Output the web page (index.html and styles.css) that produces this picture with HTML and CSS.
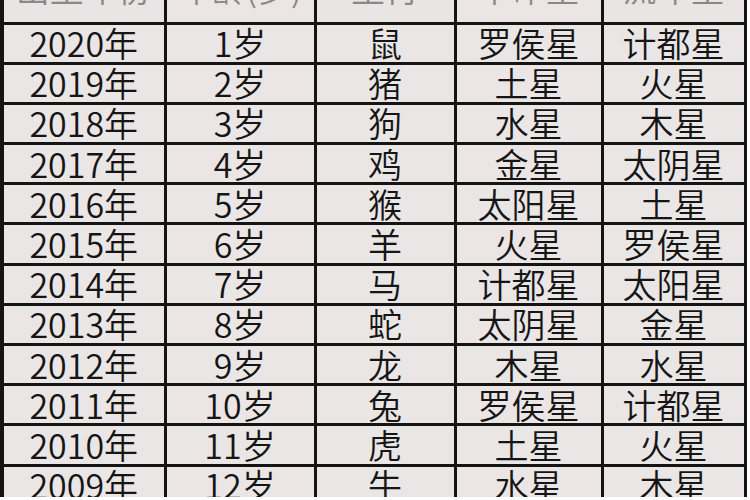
FILE: index.html
```html
<!DOCTYPE html>
<html lang="zh-CN">
<head>
<meta charset="utf-8">
<title>命星表</title>
<link rel="stylesheet" href="styles.css">
</head>
<body>
<div class="frame">
  <div class="grid">
    <div class="cell head"><span>出生年份</span></div>
    <div class="cell head"><span>年龄(岁)</span></div>
    <div class="cell head"><span>生肖</span></div>
    <div class="cell head"><span>本命星</span></div>
    <div class="cell head"><span>流年星</span></div>

    <div class="cell">2020年</div><div class="cell">1岁</div><div class="cell">鼠</div><div class="cell">罗侯星</div><div class="cell">计都星</div>
    <div class="cell">2019年</div><div class="cell">2岁</div><div class="cell">猪</div><div class="cell">土星</div><div class="cell">火星</div>
    <div class="cell">2018年</div><div class="cell">3岁</div><div class="cell">狗</div><div class="cell">水星</div><div class="cell">木星</div>
    <div class="cell">2017年</div><div class="cell">4岁</div><div class="cell">鸡</div><div class="cell">金星</div><div class="cell">太阴星</div>
    <div class="cell">2016年</div><div class="cell">5岁</div><div class="cell">猴</div><div class="cell">太阳星</div><div class="cell">土星</div>
    <div class="cell">2015年</div><div class="cell">6岁</div><div class="cell">羊</div><div class="cell">火星</div><div class="cell">罗侯星</div>
    <div class="cell">2014年</div><div class="cell">7岁</div><div class="cell">马</div><div class="cell">计都星</div><div class="cell">太阳星</div>
    <div class="cell">2013年</div><div class="cell">8岁</div><div class="cell">蛇</div><div class="cell">太阴星</div><div class="cell">金星</div>
    <div class="cell">2012年</div><div class="cell">9岁</div><div class="cell">龙</div><div class="cell">木星</div><div class="cell">水星</div>
    <div class="cell">2011年</div><div class="cell">10岁</div><div class="cell">兔</div><div class="cell">罗侯星</div><div class="cell">计都星</div>
    <div class="cell">2010年</div><div class="cell">11岁</div><div class="cell">虎</div><div class="cell">土星</div><div class="cell">火星</div>
    <div class="cell">2009年</div><div class="cell">12岁</div><div class="cell">牛</div><div class="cell">水星</div><div class="cell">木星</div>
  </div>
</div>
</body>
</html>
```

FILE: styles.css
```css
html, body {
  margin: 0;
  padding: 0;
  background: #ffffff;
  width: 750px;
  height: 500px;
  overflow: hidden;
}

.frame {
  width: 750px;
  height: 497px;
  overflow: hidden;
}

.grid {
  display: grid;
  width: 746.5px;
  box-sizing: border-box;
  grid-template-columns: 159.5px 147px 137px 144px 140px;
  grid-template-rows: 21.5px repeat(12, 37.2px);
  column-gap: 3px;
  row-gap: 3px;
  padding: 0 3px 3px 4px;
  background: #141414;
}

.cell {
  background: #e9e6e5;
  display: flex;
  align-items: center;
  justify-content: center;
  font-family: "Noto Sans CJK SC", "Noto Sans", sans-serif;
  font-weight: 350;
  font-size: 34px;
  line-height: 34px;
  color: #151515;
  overflow: hidden;
  white-space: nowrap;
}

.cell:nth-child(10n+2),
.cell:nth-child(10n+4) {
  background: #ebe5e5;
}

.head {
  align-items: flex-start;
  background: #e8e5e4;
}

.head span {
  display: block;
  line-height: 20px;
  height: 20px;
  margin-top: -22px;
  color: #8a8888;
}
```
